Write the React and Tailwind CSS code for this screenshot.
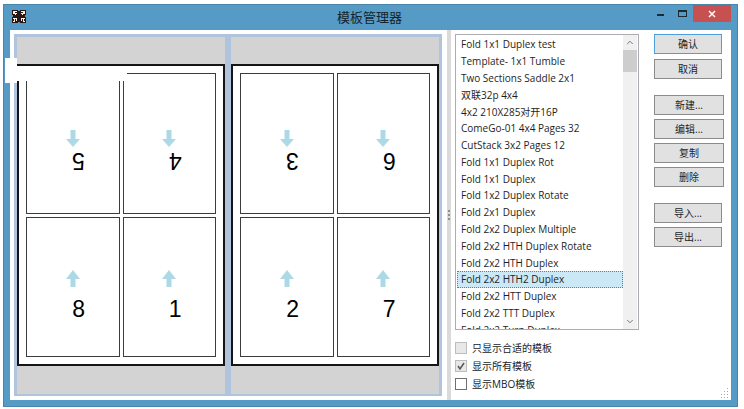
import { ChevronDown, ChevronUp } from "lucide-react";
import { useState } from "react";

const templates = [
	"Fold 1x1 Duplex test",
	"Template- 1x1 Tumble",
	"Two Sections Saddle 2x1",
	"双联32p 4x4",
	"4x2 210X285对开16P",
	"ComeGo-01 4x4 Pages 32",
	"CutStack 3x2 Pages 12",
	"Fold 1x1 Duplex Rot",
	"Fold 1x1 Duplex",
	"Fold 1x2 Duplex Rotate",
	"Fold 2x1 Duplex",
	"Fold 2x2 Duplex Multiple",
	"Fold 2x2 HTH Duplex Rotate",
	"Fold 2x2 HTH Duplex",
	"Fold 2x2 HTH2 Duplex",
	"Fold 2x2 HTT Duplex",
	"Fold 2x2 TTT Duplex",
	"Fold 2x2 Turn Duplex",
];

const sheets = [
	[5, 4, 8, 1],
	[3, 6, 2, 7],
];

const buttonGroups = [
	["确认", "取消"],
	["新建...", "编辑...", "复制", "删除"],
	["导入...", "导出..."],
];

function AppIcon() {
	return (
		<svg viewBox="0 0 14 14" className="w-3.5 h-3.5" aria-hidden="true">
			<path d="M0 1h6v1h2V1h6v5h-1v2h1v6H8v-1H6v1H0V8h1V6H0z" fill="#2a1512" />
			<path
				d="M1 2h4v1H3v1h2v1H4v1H3V5H1zM13 2H9v1h2v1H9v1h1v1h1V5h2zM1 9h4v3H4v-2H3v3H1v-1h1v-2H1zM13 9H9v3h1v-2h1v3h2v-1h-1v-2h1z"
				fill="#f7eee6"
			/>
		</svg>
	);
}

function Arrow({ down }) {
	return (
		<svg viewBox="0 0 14 17" className="w-3.5 h-[17px]" aria-hidden="true">
			<path
				d={down ? "M4.5 0h5v9H14l-7 8-7-8h4.5z" : "M7 0l7 9H9.5v8h-5V9H0z"}
				fill="#add8e6"
			/>
		</svg>
	);
}

function Page({ number, flipped }) {
	return (
		<div
			className={`flex flex-col items-center border border-[#3c3c3c] ${
				flipped ? "pt-14 gap-0.5" : "pt-[52px] gap-2.5"
			}`}
		>
			<Arrow down={flipped} />
			<span
				className={`ml-3 text-[23px] leading-6 text-black font-['Liberation_Sans',sans-serif] ${
					flipped ? "rotate-180" : ""
				}`}
			>
				{number}
			</span>
		</div>
	);
}

function Sheet({ pages }) {
	return (
		<div className="flex-1 bg-[#d3d3d3] flex flex-col pt-[27px] pb-7">
			<div className="flex-1 grid grid-cols-2 grid-rows-2 gap-[3px] p-[7px] bg-white border-2 border-[#151515]">
				{pages.map((n, i) => (
					<Page key={n} number={n} flipped={i < 2} />
				))}
			</div>
		</div>
	);
}

function Check({ label, checked, disabled, onChange }) {
	return (
		<label className="flex items-center gap-[5px] h-[18px] text-[10px] text-[#222]">
			<span className="relative flex">
				<input
					type="checkbox"
					checked={checked}
					disabled={disabled}
					onChange={onChange}
					className={`appearance-none w-3 h-3 border ${
						disabled ? "bg-[#e8e8e8] border-[#bcbcbc]" : "bg-white border-[#707070]"
					}`}
				/>
				{checked && (
					<svg viewBox="0 0 12 12" className="absolute inset-0 w-3 h-3 pointer-events-none">
						<path d="M3 6l2 3 4-6" fill="none" stroke="#555" strokeWidth="1.5" />
					</svg>
				)}
			</span>
			{label}
		</label>
	);
}

export default function App() {
	const [selected, setSelected] = useState("Fold 2x2 HTH2 Duplex");
	const [showMbo, setShowMbo] = useState(false);

	return (
		<div className="h-screen bg-white pl-[3px] pr-1.5 pt-1 pb-0.5 font-['Open_Sans','Noto_Sans_CJK_SC',sans-serif]">
			<div className="relative h-full flex flex-col bg-[#569bc5] border border-[#4a86ab] px-1.5 pb-1.5">
				<header className="flex h-[25px] shrink-0">
					<div className="w-[90px] pl-0.5 pt-1">
						<AppIcon />
					</div>
					<h1 className="flex-1 text-center text-[13px] leading-6 text-[#14242e]">
						模板管理器
					</h1>
					<div className="w-[92px] flex justify-end">
						<button aria-label="最小化" className="w-[22px] h-[17px] flex justify-center pt-[9px]">
							<span className="w-[7px] h-0.5 bg-[#1b2a33]" />
						</button>
						<button aria-label="最大化" className="w-[22px] h-[17px] flex justify-center pt-[5px]">
							<span className="w-[9px] h-[7px] border border-t-2 border-[#1b2a33]" />
						</button>
						<button aria-label="关闭" className="w-[38px] h-[17px] flex items-center justify-center bg-[#c75050]">
							<svg viewBox="0 0 8 8" className="w-2 h-2">
								<path d="M1 1l6 6M7 1L1 7" stroke="#fff" strokeWidth="1.5" />
							</svg>
						</button>
					</div>
				</header>

				<main className="relative flex-1 min-h-0 flex bg-white">
					<div className="flex-1 p-1 pr-[5px] flex">
						<div className="flex-1 flex gap-1.5 px-[3px] pt-[3px] pb-0.5 bg-[#b0c4de]">
							{sheets.map((pages) => (
								<Sheet key={pages[0]} pages={pages} />
							))}
						</div>
					</div>

					<div className="w-1 bg-[#dadada] flex flex-col items-center justify-center gap-0.5">
						<span className="w-0.5 h-0.5 bg-[#8f8f8f]" />
						<span className="w-0.5 h-0.5 bg-[#8f8f8f]" />
						<span className="w-0.5 h-0.5 bg-[#8f8f8f]" />
					</div>

					<section className="w-[188px] pl-1 pt-1 flex flex-col">
						<div className="h-[296px] flex border border-[#abadb3] px-px overflow-hidden">
							<ul className="flex-1 h-[303px] flex flex-col pt-px shrink-0">
								{templates.map((name) => (
									<li key={name} className="flex-1 min-h-0 flex">
										<button
											onClick={() => setSelected(name)}
											className={`flex-1 flex items-center px-[3px] text-[10px] leading-none text-[#1e1e1e] whitespace-nowrap border ${
												name === selected
													? "bg-[#cbe8f6] border-dotted border-[#2f8fc4]"
													: "border-transparent"
											}`}
										>
											{name}
										</button>
									</li>
								))}
							</ul>
							<div className="w-3.5 bg-[#f0f0f0] flex flex-col items-center">
								<ChevronUp className="w-2.5 h-[15px] text-[#606060]" strokeWidth={2} />
								<div className="w-full h-[22px] bg-[#cdcdcd]" />
								<ChevronDown className="mt-auto w-2.5 h-[15px] text-[#606060]" strokeWidth={2} />
							</div>
						</div>
						<div className="mt-[9px] flex flex-col">
							<Check label="只显示合适的模板" checked={false} disabled />
							<Check label="显示所有模板" checked disabled />
							<Check
								label="显示MBO模板"
								checked={showMbo}
								onChange={() => setShowMbo(!showMbo)}
							/>
						</div>
					</section>

					<aside className="w-[92px] pl-[15px] pt-1 flex flex-col gap-4">
						{buttonGroups.map((group, g) => (
							<div
								key={group[0]}
								className={`flex flex-col ${g === 0 ? "gap-[5px]" : "gap-1"} ${
									g === 1 ? "w-[70px]" : "w-[68px]"
								}`}
							>
								{group.map((label) => (
									<button
										key={label}
										className={`h-5 text-[10px] leading-none text-[#1e1e1e] bg-[#e1e1e1] border ${
											label === "确认" ? "border-[#4f9fdc]" : "border-[#8c8c8c]"
										}`}
									>
										{label}
									</button>
								))}
							</div>
						))}
					</aside>

					<svg viewBox="0 0 10 10" className="absolute right-0.5 bottom-0.5 w-2.5 h-2.5" aria-hidden="true">
						<path
							d="M8 0h1v1H8zM8 3h1v1H8zM8 6h1v1H8zM8 9h1v1H8zM5 3h1v1H5zM5 6h1v1H5zM5 9h1v1H5zM2 6h1v1H2zM2 9h1v1H2z"
							fill="#9ab0bf"
						/>
					</svg>
				</main>

				{/* blanked-out label over the first sheet */}
				<div className="absolute left-px top-[53px] w-3 h-[25px] bg-white" />
				<div className="absolute left-3 top-[61px] w-[111px] h-[15px] bg-white" />
			</div>
		</div>
	);
}
